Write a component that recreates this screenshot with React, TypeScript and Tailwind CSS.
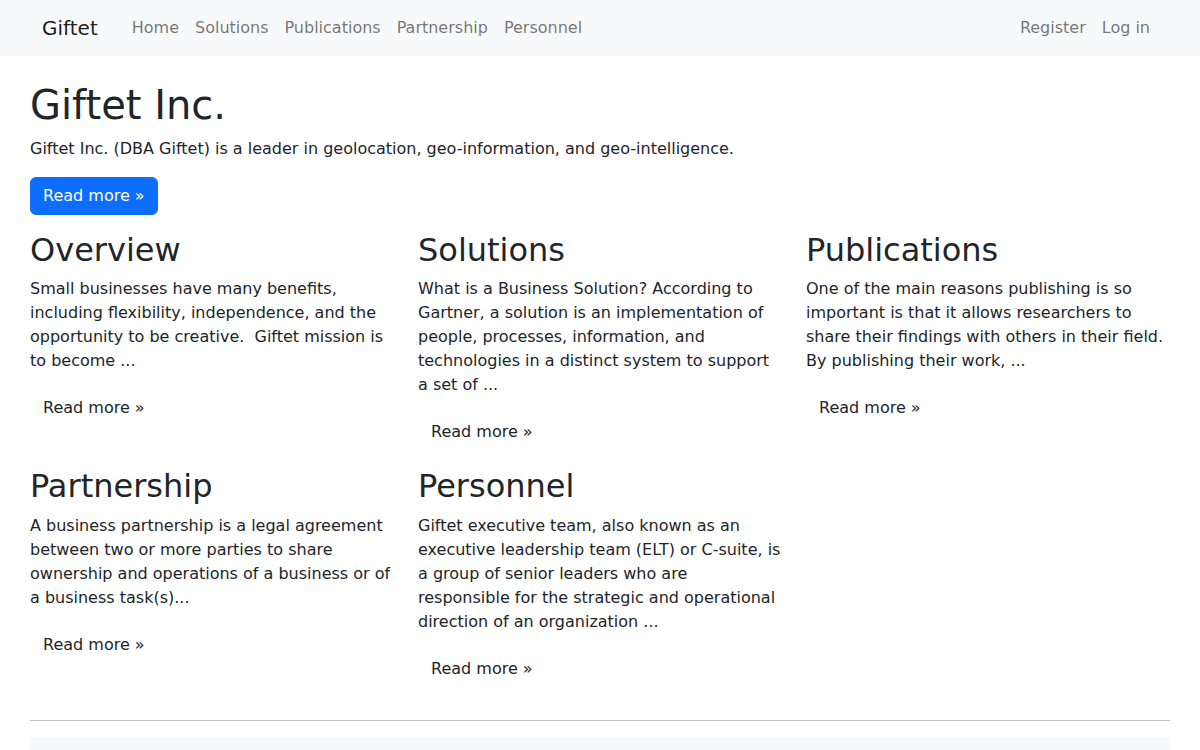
import React from "react";

const cards = [
  {
    title: "Overview",
    text: "Small businesses have many benefits, including flexibility, independence, and the opportunity to be creative.\u00a0 Giftet mission is to become ...",
  },
  {
    title: "Solutions",
    text: "What is a Business Solution? According to Gartner, a solution is an implementation of people, processes, information, and technologies in a distinct system to support a set of ...",
  },
  {
    title: "Publications",
    text: "One of the main reasons publishing is so important is that it allows researchers to share their findings with others in their field. By publishing their work, ...",
  },
  {
    title: "Partnership",
    text: "A business partnership is a legal agreement between two or more parties to share ownership and operations of a business or of a business task(s)...",
  },
  {
    title: "Personnel",
    text: "Giftet executive team, also known as an executive leadership team (ELT) or C-suite, is a group of senior leaders who are responsible for the strategic and operational direction of an organization ...",
  },
];

export default function App() {
  return (
    <div className="min-h-[750px] bg-white font-['DejaVu_Sans',sans-serif] text-[16px] leading-[24px] text-[#212529]">
      <nav className="h-[56px] bg-[#f8f9fa]">
        <div className="mx-auto flex h-full w-[1140px] items-center px-3">
          <a className="mr-[34px] py-[5px] text-[20px] leading-[30px] text-[rgba(0,0,0,0.9)]">Giftet</a>
          <ul className="flex flex-1 items-center">
            {["Home", "Solutions", "Publications", "Partnership", "Personnel"].map((l, i) => (
              <li key={l}>
                <a className={`block py-2 text-[rgba(0,0,0,0.55)] ${i === 0 ? "pr-2" : "px-2"}`}>{l}</a>
              </li>
            ))}
          </ul>
          <ul className="flex items-center">
            <li>
              <a className="block px-2 py-2 text-[rgba(0,0,0,0.55)]">Register</a>
            </li>
            <li>
              <a className="block px-2 py-2 text-[rgba(0,0,0,0.55)]">Log in</a>
            </li>
          </ul>
        </div>
      </nav>
      <div className="mx-auto w-[1140px]">
        <div className="pt-[25px]">
          <h1 className="mb-2 text-[40px] font-normal leading-[48px]">Giftet Inc.</h1>
          <p className="mb-4">Giftet Inc. (DBA Giftet) is a leader in geolocation, geo-information, and geo-intelligence.</p>
          <p className="mb-4">
            <a className="inline-block rounded-[6px] border border-[#0d6efd] bg-[#0d6efd] px-3 py-[6px] text-white">Read more »</a>
          </p>
        </div>
        <div className="grid grid-cols-3 gap-x-6">
          {cards.map((c) => (
            <div key={c.title}>
              <h2 className="mb-2 text-[32px] font-normal leading-[38.4px]">{c.title}</h2>
              <p className="mb-4">{c.text}</p>
              <p className="mb-4">
                <a className="inline-block rounded-[6px] border border-transparent px-3 py-[6px] text-[#212529]">Read more »</a>
              </p>
            </div>
          ))}
        </div>
        <hr className="my-4 border-t border-[#bfc0c1]" />
        <footer className="h-[80px] bg-[#f8f9fa]"></footer>
      </div>
    </div>
  );
}
